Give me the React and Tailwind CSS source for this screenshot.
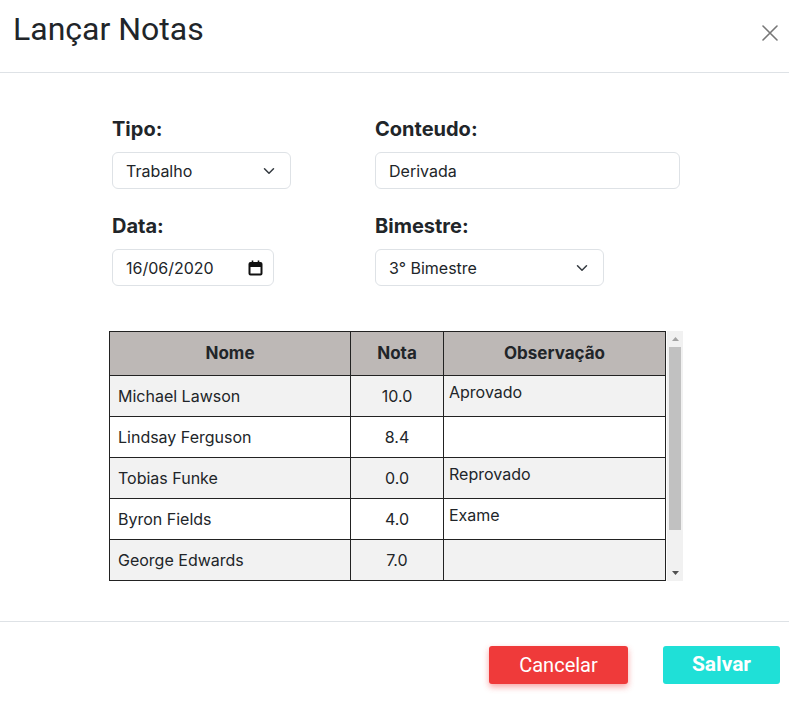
import { useState } from "react";

const alunos = [
  { nome: "Michael Lawson", nota: "10.0", obs: "Aprovado" },
  { nome: "Lindsay Ferguson", nota: "8.4", obs: "" },
  { nome: "Tobias Funke", nota: "0.0", obs: "Reprovado" },
  { nome: "Byron Fields", nota: "4.0", obs: "Exame" },
  { nome: "George Edwards", nota: "7.0", obs: "" },
];

const Chevron = () => (
  <svg width="12" height="12" viewBox="0 0 16 16" fill="none" stroke="#343a40" strokeWidth="2" strokeLinecap="round" strokeLinejoin="round">
    <path d="M2 5l6 6 6-6" />
  </svg>
);

const FakeSelect = ({ value, width }) => (
  <div className={`${width} h-[37px] border border-[#dee2e6] rounded-[6px] bg-white flex items-center justify-between pl-[13px] pr-[15px] text-base text-[#212529]`}>
    <span>{value}</span>
    <Chevron />
  </div>
);

export default function App() {
  const [conteudo, setConteudo] = useState("Derivada");

  return (
    <div className="w-[789px] h-[703px] bg-white flex flex-col text-[#212529]" style={{ fontFamily: "Inter, 'Noto Sans', sans-serif" }}>
      {/* Header */}
      <header className="h-[73px] border-b border-[#dee2e6] flex items-start justify-between pl-[13px] pr-[11px] pt-[10px] shrink-0">
        <h1 className="text-[32px] leading-[38px] text-[#212529]" style={{ fontFamily: "Roboto, 'Liberation Sans', sans-serif" }}>
          Lançar Notas
        </h1>
        <button className="mt-[15px]">
          <svg width="16" height="16" viewBox="0 0 16 16" stroke="#777" strokeWidth="1.6" strokeLinecap="round">
            <path d="M1 1l14 14M15 1L1 15" />
          </svg>
        </button>
      </header>

      {/* Body */}
      <main className="flex-1 pl-[109px] pt-[42px]">
        <div className="pl-[3px] grid grid-cols-[263px_auto]">
          <div>
            <label className="block text-[20px] leading-[28px] font-bold">Tipo:</label>
            <div className="mt-[9px]">
              <FakeSelect value="Trabalho" width="w-[179px]" />
            </div>
          </div>
          <div>
            <label className="block text-[20px] leading-[28px] font-bold">Conteudo:</label>
            <input
              value={conteudo}
              onChange={(e) => setConteudo(e.target.value)}
              className="mt-[9px] w-[305px] h-[37px] border border-[#dee2e6] rounded-[6px] px-[13px] text-base text-[#212529] outline-none"
            />
          </div>
          <div className="mt-[23px]">
            <label className="block text-[20px] leading-[28px] font-bold">Data:</label>
            <div className="mt-[9px] w-[162px] h-[37px] border border-[#dee2e6] rounded-[6px] flex items-center justify-between pl-[13px] pr-[10px] text-base">
              <span>16/06/2020</span>
              <svg width="15" height="16" viewBox="0 0 15 16" fill="none" stroke="#111">
                <rect x="1.5" y="3" width="12" height="11.5" rx="1" strokeWidth="2" />
                <path d="M1.5 5.5h12" strokeWidth="3" />
                <path d="M4.5 0.5v2.5M10.5 0.5v2.5" strokeWidth="1.6" />
              </svg>
            </div>
          </div>
          <div className="mt-[23px]">
            <label className="block text-[20px] leading-[28px] font-bold">Bimestre:</label>
            <div className="mt-[9px]">
              <FakeSelect value="3° Bimestre" width="w-[229px]" />
            </div>
          </div>
        </div>

        {/* Tabela */}
        <div className="mt-[45px] flex items-stretch">
          <table className="w-[557px] border-collapse text-base">
            <thead>
              <tr className="bg-[#bdb8b6] h-[44px]">
                <th className="border border-[#222] w-[241px] font-bold text-[17px]">Nome</th>
                <th className="border border-[#222] w-[93px] font-bold text-[17px]">Nota</th>
                <th className="border border-[#222] font-bold text-[17px]">Observação</th>
              </tr>
            </thead>
            <tbody>
              {alunos.map((a, i) => (
                <tr key={a.nome} className={`h-[41px] ${i % 2 === 0 ? "bg-[#f2f2f2]" : "bg-white"}`}>
                  <td className="border border-[#222] pl-[8px] text-[#212529]">{a.nome}</td>
                  <td className="border border-[#222] text-center">{a.nota}</td>
                  <td className="border border-[#222] align-top pl-[5px] pt-[4px]">{a.obs}</td>
                </tr>
              ))}
            </tbody>
          </table>
          {/* barra de rolagem */}
          <div className="w-[16px] ml-[1px] bg-[#f1f1f1] flex flex-col items-center">
            <div className="h-[16px] flex items-center justify-center">
              <svg width="7" height="4" viewBox="0 0 7 4"><path d="M3.5 0L7 4H0z" fill="#a3a3a3" /></svg>
            </div>
            <div className="w-[12px] h-[183px] bg-[#c1c1c1]" />
            <div className="flex-1 flex items-end justify-center pb-[6px]">
              <svg width="7" height="4" viewBox="0 0 7 4"><path d="M0 0h7L3.5 4z" fill="#505050" /></svg>
            </div>
          </div>
        </div>
      </main>

      {/* Footer */}
      <footer className="h-[82px] border-t border-[#dee2e6] flex justify-end items-start gap-[35px] pt-[24px] pr-[9px] shrink-0" style={{ fontFamily: "Roboto, 'Liberation Sans', sans-serif" }}>
        <button className="w-[139px] h-[38px] rounded-[3px] bg-[#ef3a3a] text-white text-[20px] shadow-[0_3px_6px_rgba(239,58,58,0.45)]">
          Cancelar
        </button>
        <button className="w-[117px] h-[38px] rounded-[3px] bg-[#1fe0d7] text-white text-[21px] font-bold">
          Salvar
        </button>
      </footer>
    </div>
  );
}
